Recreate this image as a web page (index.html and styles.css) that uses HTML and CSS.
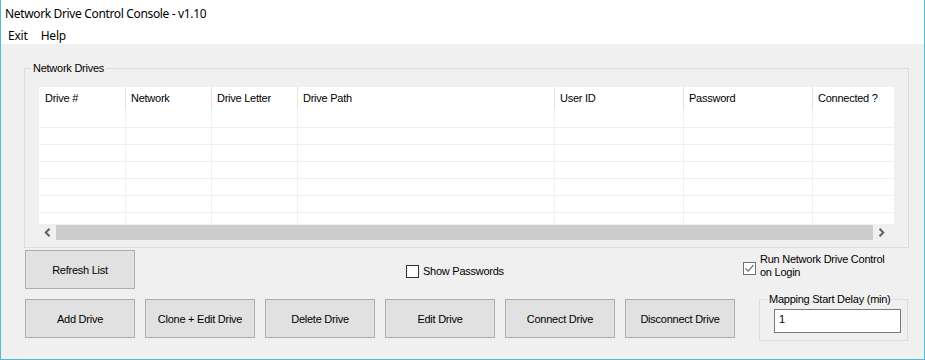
FILE: index.html
```html
<!DOCTYPE html>
<html>
<head>
<meta charset="utf-8">
<link rel="stylesheet" href="styles.css">
</head>
<body>
<div class="window">
  <div class="titlebar">Network Drive Control Console - v1.10</div>
  <div class="menubar"><span class="menu-item">Exit</span><span class="menu-item">Help</span></div>
  <div class="client">
    <fieldset class="group drives">
      <legend>Network Drives</legend>
      <div class="list">
        <div class="listview">
          <div class="lv-row lv-header">
            <div class="c c1">Drive #</div><div class="c c2">Network</div><div class="c c3">Drive Letter</div><div class="c c4">Drive Path</div><div class="c c5">User ID</div><div class="c c6">Password</div><div class="c c7">Connected ?</div>
          </div>
          <div class="lv-row"><div class="c c1"></div><div class="c c2"></div><div class="c c3"></div><div class="c c4"></div><div class="c c5"></div><div class="c c6"></div><div class="c c7"></div></div>
          <div class="lv-row"><div class="c c1"></div><div class="c c2"></div><div class="c c3"></div><div class="c c4"></div><div class="c c5"></div><div class="c c6"></div><div class="c c7"></div></div>
          <div class="lv-row"><div class="c c1"></div><div class="c c2"></div><div class="c c3"></div><div class="c c4"></div><div class="c c5"></div><div class="c c6"></div><div class="c c7"></div></div>
          <div class="lv-row"><div class="c c1"></div><div class="c c2"></div><div class="c c3"></div><div class="c c4"></div><div class="c c5"></div><div class="c c6"></div><div class="c c7"></div></div>
          <div class="lv-row"><div class="c c1"></div><div class="c c2"></div><div class="c c3"></div><div class="c c4"></div><div class="c c5"></div><div class="c c6"></div><div class="c c7"></div></div>
          <div class="lv-row"><div class="c c1"></div><div class="c c2"></div><div class="c c3"></div><div class="c c4"></div><div class="c c5"></div><div class="c c6"></div><div class="c c7"></div></div>
          <div class="lv-row"><div class="c c1"></div><div class="c c2"></div><div class="c c3"></div><div class="c c4"></div><div class="c c5"></div><div class="c c6"></div><div class="c c7"></div></div>
        </div>
        <div class="hscroll">
          <span class="arrow"><svg width="7" height="9" viewBox="0 0 7 9"><path d="M5.5 0.8 L1.8 4.5 L5.5 8.2" fill="none" stroke="#606060" stroke-width="2"/></svg></span>
          <div class="thumb"></div>
          <span class="arrow"><svg width="7" height="9" viewBox="0 0 7 9"><path d="M1.5 0.8 L5.2 4.5 L1.5 8.2" fill="none" stroke="#606060" stroke-width="2"/></svg></span>
        </div>
      </div>
    </fieldset>

    <div class="controls-row row1">
      <button class="btn">Refresh List</button>
      <label class="check show-pw"><span class="box"></span><span>Show Passwords</span></label>
      <label class="check run-login"><span class="box checked"><svg width="11" height="11" viewBox="0 0 11 11"><path d="M1.5 5.5 L4.2 8.2 L9.5 2" fill="none" stroke="#707070" stroke-width="1.2"/></svg></span><span>Run Network Drive Control<br>on Login</span></label>
    </div>

    <div class="controls-row row2">
      <button class="btn">Add Drive</button>
      <button class="btn">Clone + Edit Drive</button>
      <button class="btn">Delete Drive</button>
      <button class="btn">Edit Drive</button>
      <button class="btn">Connect Drive</button>
      <button class="btn">Disconnect Drive</button>
      <fieldset class="group mapping">
        <legend>Mapping Start Delay (min)</legend>
        <div class="textbox">1</div>
      </fieldset>
    </div>
  </div>
</div>
</body>
</html>
```

FILE: styles.css
```css
* { box-sizing: border-box; }
html, body { margin: 0; padding: 0; background: #f0f0f0; }
body { font-family: "Liberation Sans", Arial, sans-serif; font-size: 11px; color: #000; letter-spacing: -0.25px; }

.window {
  width: 925px;
  height: 360px;
  border-left: 1px solid #4fbcd4;
  border-right: 1px solid #4fbcd4;
  border-bottom: 1px solid #4fbcd4;
  background: #f0f0f0;
  display: flex;
  flex-direction: column;
  overflow: hidden;
}

.titlebar {
  height: 27px;
  background: #fff;
  font-family: "Noto Sans", "Open Sans", sans-serif;
  font-size: 12px;
  letter-spacing: -0.35px;
  line-height: 27px;
  padding-left: 4px;
  padding-bottom: 2px;
}

.menubar {
  height: 17px;
  background: #fff;
  font-family: "Noto Sans", "Open Sans", sans-serif;
  font-size: 12px;
  letter-spacing: -0.2px;
  line-height: 18px;
  display: flex;
  padding-left: 7px;
  gap: 13px;
}

.client {
  flex: 1;
  display: flex;
  flex-direction: column;
}

.group {
  border: 1px solid #dcdcdc;
  margin: 0;
}
.group legend {
  padding: 0 2px;
  line-height: 13px;
  font-size: 11px;
}

.drives {
  margin: 18px 15px 0 23px;
  padding: 12px 13px 5px 14px;
  height: 186px;
}
.drives legend { margin-left: -8px; }

.list {
  width: 855px;
  display: flex;
  flex-direction: column;
}

.listview {
  height: 137px;
  background: #fff;
  overflow: hidden;
}

.lv-row {
  display: flex;
  height: 17px;
  border-bottom: 1px solid #f0f0f0;
  width: 955px;
}
.lv-header {
  height: 24px;
  border-bottom: none;
}
.c {
  flex: none;
  border-right: 1px solid #f0f0f0;
  padding-left: 5px;
  white-space: nowrap;
}
.lv-header .c {
  border-right-color: #e5e5e5;
  line-height: 23px;
  height: 23px;
}
.c1 { width: 87px; padding-left: 6px; }
.c2 { width: 86px; }
.c3 { width: 86px; }
.c4 { width: 257px; }
.c5 { width: 129px; }
.c6 { width: 129px; }
.c7 { width: 181px; }

.hscroll {
  height: 17px;
  background: #f0f0f0;
  display: flex;
  align-items: center;
}
.hscroll .arrow {
  width: 17px;
  height: 17px;
  display: flex;
  align-items: center;
  justify-content: center;
}
.hscroll .thumb {
  width: 817px;
  height: 15px;
  background: #cdcdcd;
}

.controls-row {
  display: flex;
  padding-left: 24px;
  padding-right: 16px;
}
.row1 {
  margin-top: 2px;
  height: 39px;
  align-items: center;
}
.row2 {
  margin-top: 10px;
  gap: 10px;
  align-items: flex-start;
}

.btn {
  width: 110px;
  height: 39px;
  background: #e1e1e1;
  border: 1px solid #adadad;
  font-family: "Liberation Sans", Arial, sans-serif;
  font-size: 11px;
  letter-spacing: -0.25px;
  color: #000;
  padding: 0;
  margin: 0;
  flex: none;
}

.check {
  display: flex;
  align-items: center;
  gap: 4px;
  line-height: 13px;
}
.check .box {
  width: 13px;
  height: 13px;
  background: #fff;
  border: 1px solid #333;
  flex: none;
  display: flex;
  align-items: center;
  justify-content: center;
}
.check .box.checked { border-color: #707070; }
.show-pw { margin-left: 271px; margin-top: 4px; }
.run-login {
  margin-left: auto;
  width: 165px;
  align-self: flex-start;
  margin-top: 3px;
  align-items: flex-start;
}
.run-login .box { margin-top: 9px; }

.mapping {
  margin: -6px 0 0 14px;
  padding: 3px 6px 7px 14px;
  width: 150px;
}
.mapping legend { margin-left: -7px; }
.textbox {
  width: 127px;
  height: 24px;
  background: #fff;
  border: 1px solid #7a7a7a;
  padding: 3px 0 0 4px;
  font-size: 11px;
}
```
